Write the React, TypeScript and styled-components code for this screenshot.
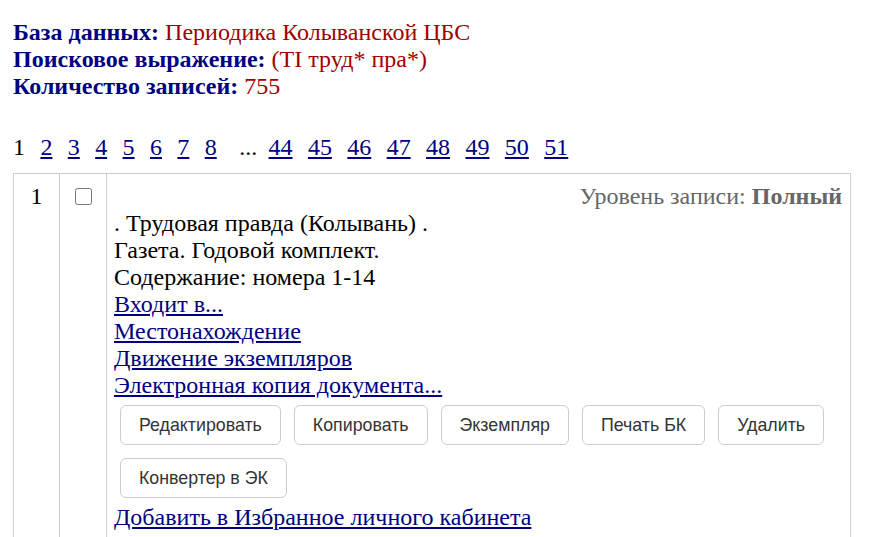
import React from "react";
import styled, { createGlobalStyle } from "styled-components";

const GlobalStyle = createGlobalStyle`
    body {
        margin: 0;
        padding: 19px 13px 0 13px;
        background: #ffffff;
        font-family: "Liberation Serif", "Times New Roman", serif;
        font-size: 24px;
        line-height: 27px;
        color: #000000;
    }
`;

const SearchInfo = styled.div`
    display: flex;
    flex-direction: column;
`;

const InfoLine = styled.div`
    .info-label {
        font-weight: bold;
        color: #000080;
    }

    .info-value {
        color: #a00000;
    }
`;

const Pager = styled.div`
    display: flex;
    align-items: baseline;
    gap: 15.4px;
    margin-top: 34px;
`;

const PageLink = styled.a<{ $current?: boolean }>`
    color: ${(p) => (p.$current ? "#000000" : "#000080")};
    text-decoration: ${(p) => (p.$current ? "none" : "underline")};
    cursor: pointer;
`;

const Dots = styled.span`
    margin: 0 -4px 0 7px;
`;

const ResultTable = styled.table`
    margin-top: 12px;
    width: 838px;
    border-collapse: collapse;

    td {
        border: 1px solid #cccccc;
        vertical-align: top;
    }
`;

const NumCell = styled.td`
    width: 45px;
    text-align: center;
    padding: 9px 0;
`;

const CheckCell = styled.td`
    width: 45px;
    text-align: center;
    padding: 10px 0 0 1px;

    input {
        width: 17px;
        height: 17px;
        margin: 0;
    }
`;

const RecordCell = styled.td`
    padding: 9px 8px 6px 7px;
`;

const RecordLevel = styled.div`
    text-align: right;
    color: #666666;

    b {
        font-weight: bold;
    }
`;

const RecordLink = styled.a`
    display: block;
    color: #000080;
    text-decoration: underline;
    cursor: pointer;
`;

const Actions = styled.div`
    display: flex;
    flex-wrap: wrap;
    gap: 13px 13px;
    padding: 6px 6px;
`;

const ActionButton = styled.button`
    height: 40px;
    padding: 0 18px;
    border: 1px solid #cccccc;
    border-radius: 6px;
    background: #ffffff;
    color: #333333;
    font-family: "Liberation Sans", Arial, sans-serif;
    font-size: 17.8px;
    cursor: pointer;
`;

const pages = ["2", "3", "4", "5", "6", "7", "8"];
const lastPages = ["44", "45", "46", "47", "48", "49", "50", "51"];
const actions = [
    "Редактировать",
    "Копировать",
    "Экземпляр",
    "Печать БК",
    "Удалить",
    "Конвертер в ЭК",
];

const App = () => {
    return (
        <>
            <GlobalStyle />
            <SearchInfo>
                <InfoLine>
                    <span className="info-label">База данных:</span>{" "}
                    <span className="info-value">Периодика Колыванской ЦБС</span>
                </InfoLine>
                <InfoLine>
                    <span className="info-label">Поисковое выражение:</span>{" "}
                    <span className="info-value">(TI труд* пра*)</span>
                </InfoLine>
                <InfoLine>
                    <span className="info-label">Количество записей:</span>{" "}
                    <span className="info-value">755</span>
                </InfoLine>
            </SearchInfo>

            <Pager>
                <PageLink $current>1</PageLink>
                {pages.map((p) => (
                    <PageLink key={p}>{p}</PageLink>
                ))}
                <Dots>...</Dots>
                {lastPages.map((p) => (
                    <PageLink key={p}>{p}</PageLink>
                ))}
            </Pager>

            <ResultTable>
                <tbody>
                    <tr>
                        <NumCell>1</NumCell>
                        <CheckCell>
                            <input type="checkbox" />
                        </CheckCell>
                        <RecordCell>
                            <RecordLevel>
                                Уровень записи: <b>Полный</b>
                            </RecordLevel>
                            <div>. Трудовая правда (Колывань) .</div>
                            <div>Газета. Годовой комплект.</div>
                            <div>Содержание: номера 1-14</div>
                            <RecordLink>Входит в...</RecordLink>
                            <RecordLink>Местонахождение</RecordLink>
                            <RecordLink>Движение экземпляров</RecordLink>
                            <RecordLink>Электронная копия документа...</RecordLink>
                            <Actions>
                                {actions.map((a) => (
                                    <ActionButton key={a}>{a}</ActionButton>
                                ))}
                            </Actions>
                            <RecordLink>Добавить в Избранное личного кабинета</RecordLink>
                            <div>&nbsp;</div>
                        </RecordCell>
                    </tr>
                </tbody>
            </ResultTable>
        </>
    );
};

export default App;
